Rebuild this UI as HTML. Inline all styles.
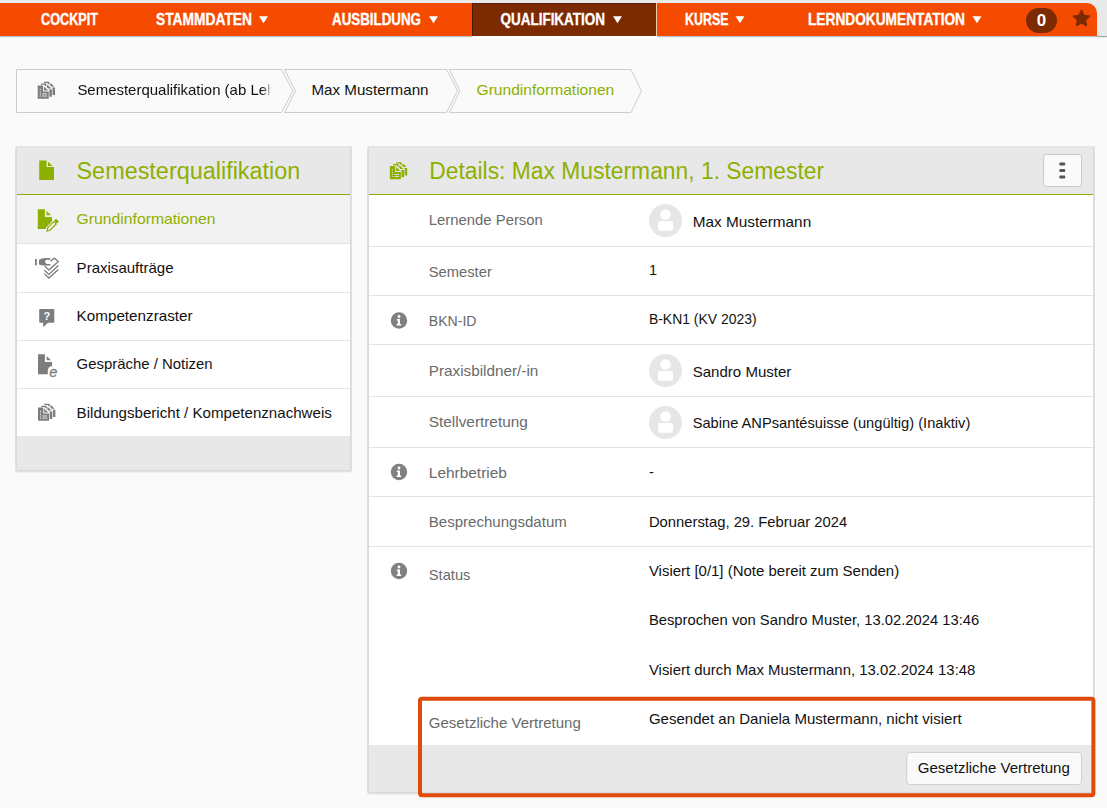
<!DOCTYPE html>
<html><head><meta charset="utf-8"><title>Semesterqualifikation</title>
<style>
html,body{margin:0;padding:0;background:#fafafa;}
body{width:1107px;height:808px;overflow:hidden;font-family:"Liberation Sans", sans-serif;}
svg{display:block;font-family:"Liberation Sans", sans-serif;}
</style></head>
<body>
<svg width="1107" height="808" viewBox="0 0 1107 808">
<rect x="0" y="0" width="1107" height="808" fill="#fafafa"/>
<rect x="0" y="0" width="1107" height="36" fill="#e9e9e9"/>
<rect x="0" y="2" width="1107" height="1" fill="#e4eef4"/>
<path d="M0 3 H1087 A10 10 0 0 1 1097 13 V36 H0 Z" fill="#f54b00"/>
<rect x="0" y="36" width="1107" height="1" fill="#b9c3ca"/>
<rect x="1097" y="36" width="10" height="1" fill="#a3a3a3"/>
<rect x="0" y="37" width="1107" height="1" fill="#eeeeee"/>
<rect x="472" y="3" width="185" height="33" fill="#7c2a00"/>
<rect x="472" y="3" width="1" height="33" fill="#4a1800"/>
<rect x="472" y="3" width="184" height="1" fill="#5a1e00"/>
<rect x="656" y="3" width="1" height="33" fill="#f3c9b0"/>
<rect x="472" y="36" width="185" height="2" fill="#ffffff"/>
<text x="41" y="24.8" font-size="16" fill="#ffffff" font-weight="bold" textLength="57" lengthAdjust="spacingAndGlyphs" stroke="#fff" stroke-width="0.35">COCKPIT</text>
<text x="156" y="24.8" font-size="16" fill="#ffffff" font-weight="bold" textLength="96" lengthAdjust="spacingAndGlyphs" stroke="#fff" stroke-width="0.35">STAMMDATEN</text>
<path d="M259 16.2 H268 L263.5 23.2 Z" fill="#fff"/>
<text x="332" y="24.8" font-size="16" fill="#ffffff" font-weight="bold" textLength="89" lengthAdjust="spacingAndGlyphs" stroke="#fff" stroke-width="0.35">AUSBILDUNG</text>
<path d="M429 16.2 H438 L433.5 23.2 Z" fill="#fff"/>
<text x="500.5" y="24.8" font-size="16" fill="#ffffff" font-weight="bold" textLength="104.5" lengthAdjust="spacingAndGlyphs" stroke="#fff" stroke-width="0.35">QUALIFIKATION</text>
<path d="M613 16.2 H622 L617.5 23.2 Z" fill="#fff"/>
<text x="685" y="24.8" font-size="16" fill="#ffffff" font-weight="bold" textLength="43.5" lengthAdjust="spacingAndGlyphs" stroke="#fff" stroke-width="0.35">KURSE</text>
<path d="M735.5 16.2 H744.5 L740.0 23.2 Z" fill="#fff"/>
<text x="808" y="24.8" font-size="16" fill="#ffffff" font-weight="bold" textLength="157" lengthAdjust="spacingAndGlyphs" stroke="#fff" stroke-width="0.35">LERNDOKUMENTATION</text>
<path d="M972.5 16.2 H981.5 L977.0 23.2 Z" fill="#fff"/>
<rect x="1026" y="8" width="31" height="25" rx="12.5" fill="#7c2a00"/>
<text x="1041.5" y="25.8" font-size="17" fill="#fff" font-weight="bold" text-anchor="middle">0</text>
<polygon points="1081.50,10.10 1084.03,15.22 1089.68,16.04 1085.59,20.03 1086.55,25.66 1081.50,23.00 1076.45,25.66 1077.41,20.03 1073.32,16.04 1078.97,15.22" fill="#7c2a00" stroke="#7c2a00" stroke-width="1.2" stroke-linejoin="round"/>
<path d="M16.5 69.5 H281.5 L293 91 L281.5 112.5 H16.5 Z" fill="#fafafa" stroke="#cdcdcd" stroke-width="1"/>
<path d="M284.5 69.5 H446.5 L457.5 91 L446.5 112.5 H284.5 L295.5 91 Z" fill="#fafafa" stroke="#cdcdcd" stroke-width="1"/>
<path d="M449.5 69.5 H631 L641.5 91 L631 112.5 H449.5 L460 91 Z" fill="#fafafa" stroke="#cdcdcd" stroke-width="1"/>
<defs><linearGradient id="fade" x1="0" x2="1"><stop offset="0" stop-color="#fff"/><stop offset="0.955" stop-color="#fff"/><stop offset="1" stop-color="#000"/></linearGradient><mask id="bcm" maskUnits="userSpaceOnUse" x="0" y="60" width="300" height="60"><rect x="60" y="70" width="212" height="40" fill="url(#fade)"/></mask></defs>
<g mask="url(#bcm)">
<text x="77.4" y="95" font-size="14.5" fill="#121212" font-weight="normal" textLength="198" lengthAdjust="spacingAndGlyphs">Semesterqualifikation (ab Leh</text>
</g>
<text x="311.5" y="95" font-size="14.5" fill="#121212" font-weight="normal" textLength="117" lengthAdjust="spacingAndGlyphs">Max Mustermann</text>
<text x="476.5" y="95" font-size="14.5" fill="#8db000" font-weight="normal" textLength="137.8" lengthAdjust="spacingAndGlyphs">Grundinformationen</text>
<rect x="15" y="146" width="337" height="326" rx="2" fill="#e0e0e0"/>
<rect x="16" y="146" width="335" height="325" fill="#dadada"/>
<rect x="17" y="472" width="333" height="1" fill="#efefef"/>
<rect x="17" y="147" width="333" height="47" fill="#e8e8e8"/>
<rect x="17" y="146" width="333" height="1" fill="#e3e3e3"/>
<rect x="17" y="194" width="333" height="1" fill="#8db000"/>
<rect x="17" y="195" width="333" height="48" fill="#f2f2f2"/>
<rect x="17" y="244" width="333" height="48" fill="#ffffff"/>
<rect x="17" y="293" width="333" height="47" fill="#ffffff"/>
<rect x="17" y="341" width="333" height="47" fill="#ffffff"/>
<rect x="17" y="389" width="333" height="47" fill="#ffffff"/>
<rect x="17" y="243" width="333" height="1" fill="#e3e3e3"/>
<rect x="17" y="292" width="333" height="1" fill="#e3e3e3"/>
<rect x="17" y="340" width="333" height="1" fill="#e3e3e3"/>
<rect x="17" y="388" width="333" height="1" fill="#e3e3e3"/>
<rect x="17" y="436" width="333" height="34" fill="#e8e8e8"/>
<text x="76.5" y="179.3" font-size="23.3" fill="#8db000" font-weight="normal" textLength="223.8" lengthAdjust="spacingAndGlyphs">Semesterqualifikation</text>
<text x="76.6" y="224.4" font-size="14.5" fill="#8db000" font-weight="normal" textLength="139" lengthAdjust="spacingAndGlyphs">Grundinformationen</text>
<text x="76.6" y="273.2" font-size="14.5" fill="#121212" font-weight="normal" textLength="97" lengthAdjust="spacingAndGlyphs">Praxisaufträge</text>
<text x="76.6" y="321.2" font-size="14.5" fill="#121212" font-weight="normal" textLength="116" lengthAdjust="spacingAndGlyphs">Kompetenzraster</text>
<text x="76.6" y="369.3" font-size="14.5" fill="#121212" font-weight="normal" textLength="136" lengthAdjust="spacingAndGlyphs">Gespräche / Notizen</text>
<text x="76.6" y="418" font-size="14.5" fill="#121212" font-weight="normal" textLength="255.2" lengthAdjust="spacingAndGlyphs">Bildungsbericht / Kompetenznachweis</text>
<rect x="367" y="146" width="728" height="648" rx="2" fill="#e0e0e0"/>
<rect x="368" y="146" width="726" height="647" fill="#dadada"/>
<rect x="369" y="794" width="724" height="1" fill="#efefef"/>
<rect x="369" y="147" width="724" height="47" fill="#e8e8e8"/>
<rect x="369" y="146" width="724" height="1" fill="#e3e3e3"/>
<rect x="369" y="194" width="724" height="1" fill="#8db000"/>
<rect x="369" y="195" width="724" height="550" fill="#ffffff"/>
<rect x="369" y="246" width="724" height="1" fill="#e3e3e3"/>
<rect x="369" y="295" width="724" height="1" fill="#e3e3e3"/>
<rect x="369" y="344" width="724" height="1" fill="#e3e3e3"/>
<rect x="369" y="396" width="724" height="1" fill="#e3e3e3"/>
<rect x="369" y="447" width="724" height="1" fill="#e3e3e3"/>
<rect x="369" y="496" width="724" height="1" fill="#e3e3e3"/>
<rect x="369" y="546" width="724" height="1" fill="#e3e3e3"/>
<rect x="369" y="745" width="724" height="47" fill="#e8e8e8"/>
<text x="429.3" y="178.8" font-size="23.3" fill="#8db000" font-weight="normal" textLength="394.8" lengthAdjust="spacingAndGlyphs">Details: Max Mustermann, 1. Semester</text>
<rect x="1043.5" y="154.5" width="38" height="32" rx="3" fill="#fafafa" stroke="#c8c8c8"/>
<rect x="1059.4" y="162.6" width="5.8" height="2.9" rx="0.8" fill="#555"/>
<rect x="1059.4" y="169.1" width="5.8" height="2.9" rx="0.8" fill="#555"/>
<rect x="1059.4" y="175.6" width="5.8" height="2.9" rx="0.8" fill="#555"/>
<text x="428.8" y="225" font-size="14.5" fill="#6a6a6a" font-weight="normal" textLength="114" lengthAdjust="spacingAndGlyphs">Lernende Person</text>
<text x="428.8" y="277" font-size="14.5" fill="#6a6a6a" font-weight="normal" textLength="63" lengthAdjust="spacingAndGlyphs">Semester</text>
<text x="428.8" y="326" font-size="14.5" fill="#6a6a6a" font-weight="normal" textLength="47.7" lengthAdjust="spacingAndGlyphs">BKN-ID</text>
<text x="428.8" y="375.8" font-size="14.5" fill="#6a6a6a" font-weight="normal" textLength="109.5" lengthAdjust="spacingAndGlyphs">Praxisbildner/-in</text>
<text x="428.8" y="426.8" font-size="14.5" fill="#6a6a6a" font-weight="normal" textLength="99" lengthAdjust="spacingAndGlyphs">Stellvertretung</text>
<text x="428.8" y="477.7" font-size="14.5" fill="#6a6a6a" font-weight="normal" textLength="78.1" lengthAdjust="spacingAndGlyphs">Lehrbetrieb</text>
<text x="428.8" y="526.8" font-size="14.5" fill="#6a6a6a" font-weight="normal" textLength="138" lengthAdjust="spacingAndGlyphs">Besprechungsdatum</text>
<text x="428.8" y="579.7" font-size="14.5" fill="#6a6a6a" font-weight="normal" textLength="41.6" lengthAdjust="spacingAndGlyphs">Status</text>
<text x="428.8" y="728.2" font-size="14.5" fill="#6a6a6a" font-weight="normal" textLength="152" lengthAdjust="spacingAndGlyphs">Gesetzliche Vertretung</text>
<text x="692.6999999999999" y="226.8" font-size="14.5" fill="#121212" font-weight="normal" textLength="118.5" lengthAdjust="spacingAndGlyphs">Max Mustermann</text>
<text x="648.9" y="274.9" font-size="14.5" fill="#121212" font-weight="normal">1</text>
<text x="648.9" y="324.1" font-size="14.5" fill="#121212" font-weight="normal" textLength="107.7" lengthAdjust="spacingAndGlyphs">B-KN1 (KV 2023)</text>
<text x="692.6999999999999" y="377" font-size="14.5" fill="#121212" font-weight="normal" textLength="98.7" lengthAdjust="spacingAndGlyphs">Sandro Muster</text>
<text x="692.6999999999999" y="428.1" font-size="14.5" fill="#121212" font-weight="normal" textLength="277.59999999999997" lengthAdjust="spacingAndGlyphs">Sabine ANPsantésuisse (ungültig) (Inaktiv)</text>
<text x="648.9" y="477" font-size="14.5" fill="#121212" font-weight="normal">-</text>
<text x="648.9" y="526.7" font-size="14.5" fill="#121212" font-weight="normal" textLength="198.29999999999998" lengthAdjust="spacingAndGlyphs">Donnerstag, 29. Februar 2024</text>
<text x="648.9" y="575.5" font-size="14.5" fill="#121212" font-weight="normal" textLength="250.29999999999998" lengthAdjust="spacingAndGlyphs">Visiert [0/1] (Note bereit zum Senden)</text>
<text x="648.9" y="625.2" font-size="14.5" fill="#121212" font-weight="normal" textLength="330.4" lengthAdjust="spacingAndGlyphs">Besprochen von Sandro Muster, 13.02.2024 13:46</text>
<text x="648.9" y="675.4" font-size="14.5" fill="#121212" font-weight="normal" textLength="326.5" lengthAdjust="spacingAndGlyphs">Visiert durch Max Mustermann, 13.02.2024 13:48</text>
<text x="648.9" y="724.1" font-size="14.5" fill="#121212" font-weight="normal" textLength="312.7" lengthAdjust="spacingAndGlyphs">Gesendet an Daniela Mustermann, nicht visiert</text>
<circle cx="665.5" cy="220.5" r="16.5" fill="#e6e6e6"/>
<circle cx="665.5" cy="214.5" r="5.3" fill="#fff"/>
<rect x="658" y="221" width="15" height="9.7" rx="2" fill="#fff"/>
<circle cx="665.5" cy="370.5" r="16.5" fill="#e6e6e6"/>
<circle cx="665.5" cy="364.5" r="5.3" fill="#fff"/>
<rect x="658" y="371" width="15" height="9.7" rx="2" fill="#fff"/>
<circle cx="665.5" cy="422.5" r="16.5" fill="#e6e6e6"/>
<circle cx="665.5" cy="416.5" r="5.3" fill="#fff"/>
<rect x="658" y="423" width="15" height="9.7" rx="2" fill="#fff"/>
<circle cx="399" cy="320.5" r="8.2" fill="#808080"/>
<circle cx="399" cy="316.5" r="1.4" fill="#fff"/>
<path d="M396.8 318.9 H400 V323.9 H401.2 V325.5 H396.6 V323.9 H397.8 V320.4 H396.8 Z" fill="#fff"/>
<circle cx="399" cy="472" r="8.2" fill="#808080"/>
<circle cx="399" cy="468" r="1.4" fill="#fff"/>
<path d="M396.8 470.4 H400 V475.4 H401.2 V477 H396.6 V475.4 H397.8 V471.9 H396.8 Z" fill="#fff"/>
<circle cx="399" cy="571" r="8.2" fill="#808080"/>
<circle cx="399" cy="567" r="1.4" fill="#fff"/>
<path d="M396.8 569.4 H400 V574.4 H401.2 V576 H396.6 V574.4 H397.8 V570.9 H396.8 Z" fill="#fff"/>
<g transform="translate(32.85 76.5)"><path d="M11.2 5.2 H17.4 L22.2 10.0 V18.4 H11.2 Z" fill="#fafafa" stroke="#fafafa" stroke-width="1.3" stroke-linejoin="round"/><path d="M11.2 5.2 H16.549999999999997 V11.100000000000001 H22.2 V18.4 H11.2 Z M17.4 6.2 L21.6 10.100000000000001 H17.4 Z" fill="#7d7d7d"/><path d="M8.05 7.1 H14.25 L19.05 11.899999999999999 V20.299999999999997 H8.05 Z" fill="#fafafa" stroke="#fafafa" stroke-width="1.3" stroke-linejoin="round"/><path d="M8.05 7.1 H13.4 V13.0 H19.05 V20.299999999999997 H8.05 Z M14.25 8.1 L18.450000000000003 12.0 H14.25 Z" fill="#7d7d7d"/><path d="M4.85 9 H11.05 L15.85 13.8 V22.2 H4.85 Z" fill="#fafafa" stroke="#fafafa" stroke-width="1.3" stroke-linejoin="round"/><path d="M4.85 9 H10.2 V14.9 H15.85 V22.2 H4.85 Z M11.05 10.0 L15.25 13.9 H11.05 Z" fill="#7d7d7d"/><circle cx="7.3999999999999995" cy="12.8" r="0.6" fill="#fafafa"/><circle cx="7.3999999999999995" cy="15.3" r="0.6" fill="#fafafa"/><circle cx="7.3999999999999995" cy="17.4" r="0.6" fill="#fafafa"/><circle cx="7.3999999999999995" cy="19.5" r="0.6" fill="#fafafa"/><rect x="9.149999999999999" y="17.0" width="4.9" height="0.8" fill="#fafafa"/><rect x="9.149999999999999" y="19.1" width="4.9" height="0.8" fill="#fafafa"/></g>
<g transform="translate(385 157)"><path d="M11.2 5.2 H17.4 L22.2 10.0 V18.4 H11.2 Z" fill="#e8e8e8" stroke="#e8e8e8" stroke-width="1.3" stroke-linejoin="round"/><path d="M11.2 5.2 H16.549999999999997 V11.100000000000001 H22.2 V18.4 H11.2 Z M17.4 6.2 L21.6 10.100000000000001 H17.4 Z" fill="#8db000"/><path d="M8.05 7.1 H14.25 L19.05 11.899999999999999 V20.299999999999997 H8.05 Z" fill="#e8e8e8" stroke="#e8e8e8" stroke-width="1.3" stroke-linejoin="round"/><path d="M8.05 7.1 H13.4 V13.0 H19.05 V20.299999999999997 H8.05 Z M14.25 8.1 L18.450000000000003 12.0 H14.25 Z" fill="#8db000"/><path d="M4.85 9 H11.05 L15.85 13.8 V22.2 H4.85 Z" fill="#e8e8e8" stroke="#e8e8e8" stroke-width="1.3" stroke-linejoin="round"/><path d="M4.85 9 H10.2 V14.9 H15.85 V22.2 H4.85 Z M11.05 10.0 L15.25 13.9 H11.05 Z" fill="#8db000"/><circle cx="7.3999999999999995" cy="12.8" r="0.6" fill="#e8e8e8"/><circle cx="7.3999999999999995" cy="15.3" r="0.6" fill="#e8e8e8"/><circle cx="7.3999999999999995" cy="17.4" r="0.6" fill="#e8e8e8"/><circle cx="7.3999999999999995" cy="19.5" r="0.6" fill="#e8e8e8"/><rect x="9.149999999999999" y="17.0" width="4.9" height="0.8" fill="#e8e8e8"/><rect x="9.149999999999999" y="19.1" width="4.9" height="0.8" fill="#e8e8e8"/></g>
<g transform="translate(33.15 398.6)"><path d="M11.2 5.2 H17.4 L22.2 10.0 V18.4 H11.2 Z" fill="#ffffff" stroke="#ffffff" stroke-width="1.3" stroke-linejoin="round"/><path d="M11.2 5.2 H16.549999999999997 V11.100000000000001 H22.2 V18.4 H11.2 Z M17.4 6.2 L21.6 10.100000000000001 H17.4 Z" fill="#7d7d7d"/><path d="M8.05 7.1 H14.25 L19.05 11.899999999999999 V20.299999999999997 H8.05 Z" fill="#ffffff" stroke="#ffffff" stroke-width="1.3" stroke-linejoin="round"/><path d="M8.05 7.1 H13.4 V13.0 H19.05 V20.299999999999997 H8.05 Z M14.25 8.1 L18.450000000000003 12.0 H14.25 Z" fill="#7d7d7d"/><path d="M4.85 9 H11.05 L15.85 13.8 V22.2 H4.85 Z" fill="#ffffff" stroke="#ffffff" stroke-width="1.3" stroke-linejoin="round"/><path d="M4.85 9 H10.2 V14.9 H15.85 V22.2 H4.85 Z M11.05 10.0 L15.25 13.9 H11.05 Z" fill="#7d7d7d"/><circle cx="7.3999999999999995" cy="12.8" r="0.6" fill="#ffffff"/><circle cx="7.3999999999999995" cy="15.3" r="0.6" fill="#ffffff"/><circle cx="7.3999999999999995" cy="17.4" r="0.6" fill="#ffffff"/><circle cx="7.3999999999999995" cy="19.5" r="0.6" fill="#ffffff"/><rect x="9.149999999999999" y="17.0" width="4.9" height="0.8" fill="#ffffff"/><rect x="9.149999999999999" y="19.1" width="4.9" height="0.8" fill="#ffffff"/></g>
<path d="M39.2 160.4 H46.6 V167 H54 V180 H39.2 Z" fill="#8db000"/>
<path d="M48 161.8 L52.6 166 H48 Z" fill="#8db000"/>
<path d="M37.8 209.3 H44.9 V216.9 H52.1 V221.3 L46 227.5 L45.6 229.1 H37.8 Z" fill="#8db000"/>
<path d="M46.5 210.8 L51 215.2 H46.5 Z" fill="#8db000"/>
<path d="M47 231.2 L47.8 227.6 L53.8 221.6 L56.2 224 L50.2 230 Z" fill="none" stroke="#8db000" stroke-width="1.2" stroke-linejoin="round"/>
<path d="M54.6 220.6 L56 219.2 L58.4 221.6 L57 223 Z" fill="#8db000" stroke="#8db000" stroke-width="1"/>
<g transform="translate(32 253)" fill="none" stroke="#7d7d7d" stroke-width="1.3" stroke-linejoin="miter"><rect x="3" y="5.9" width="1.8" height="6.4" fill="#7d7d7d" stroke="none"/><path d="M7 6.8 Q10 5 13.5 4.9 H17.2 Q18.6 5 18.6 6 Q18.6 6.8 17.6 6.8 H14.6 Q13 7.4 13 9 Q13.4 10.8 15 10.9 H17.8 Q18.6 11 18.6 11.8 Q18.6 12.6 17.6 12.6 H10.5 L7 11.6 Z" fill="#7d7d7d" stroke="none"/><path d="M12.8 13 L16.9 17.1 L26.3 8.5 L22.3 5.2 L18.6 8.2"/><path d="M12.3 17.3 L16.9 21.4 L26.4 12.6"/><path d="M12.3 20.6 L16.9 25 L26.4 16.4"/></g>
<path d="M7.2 5.9 H20.3 Q21.3 5.9 21.3 6.9 V18.75 Q21.3 19.75 20.3 19.75 H14.9 L10.4 24.3 L10 19.75 H7.2 Q6.2 19.75 6.2 18.75 V6.9 Q6.2 5.9 7.2 5.9 Z" transform="translate(33 303)" fill="#7d7d7d"/>
<text x="46.9" y="319.6" font-size="11" font-weight="bold" fill="#ffffff" text-anchor="middle">?</text>
<path d="M38 354.3 H44.9 V361.9 H52.1 V366 A5 5 0 0 0 47.8 371 V374.3 H38 Z" fill="#7d7d7d"/>
<path d="M46.7 355.9 L51 360.2 H46.7 Z" fill="#7d7d7d"/>
<text x="49.2" y="376.8" font-size="14.5" font-style="italic" fill="#7d7d7d" stroke="#7d7d7d" stroke-width="0.3">e</text>
<rect x="906.8" y="752.5" width="174.7" height="32" rx="3" fill="#fafafa" stroke="#cfcfcf"/>
<text x="917.8" y="772.5" font-size="14.5" fill="#121212" font-weight="normal" textLength="152" lengthAdjust="spacingAndGlyphs">Gesetzliche Vertretung</text>
<rect x="420" y="698.7" width="673.4" height="96.5" rx="2" fill="none" stroke="#e04a0a" stroke-width="4"/>
</svg>
</body></html>
